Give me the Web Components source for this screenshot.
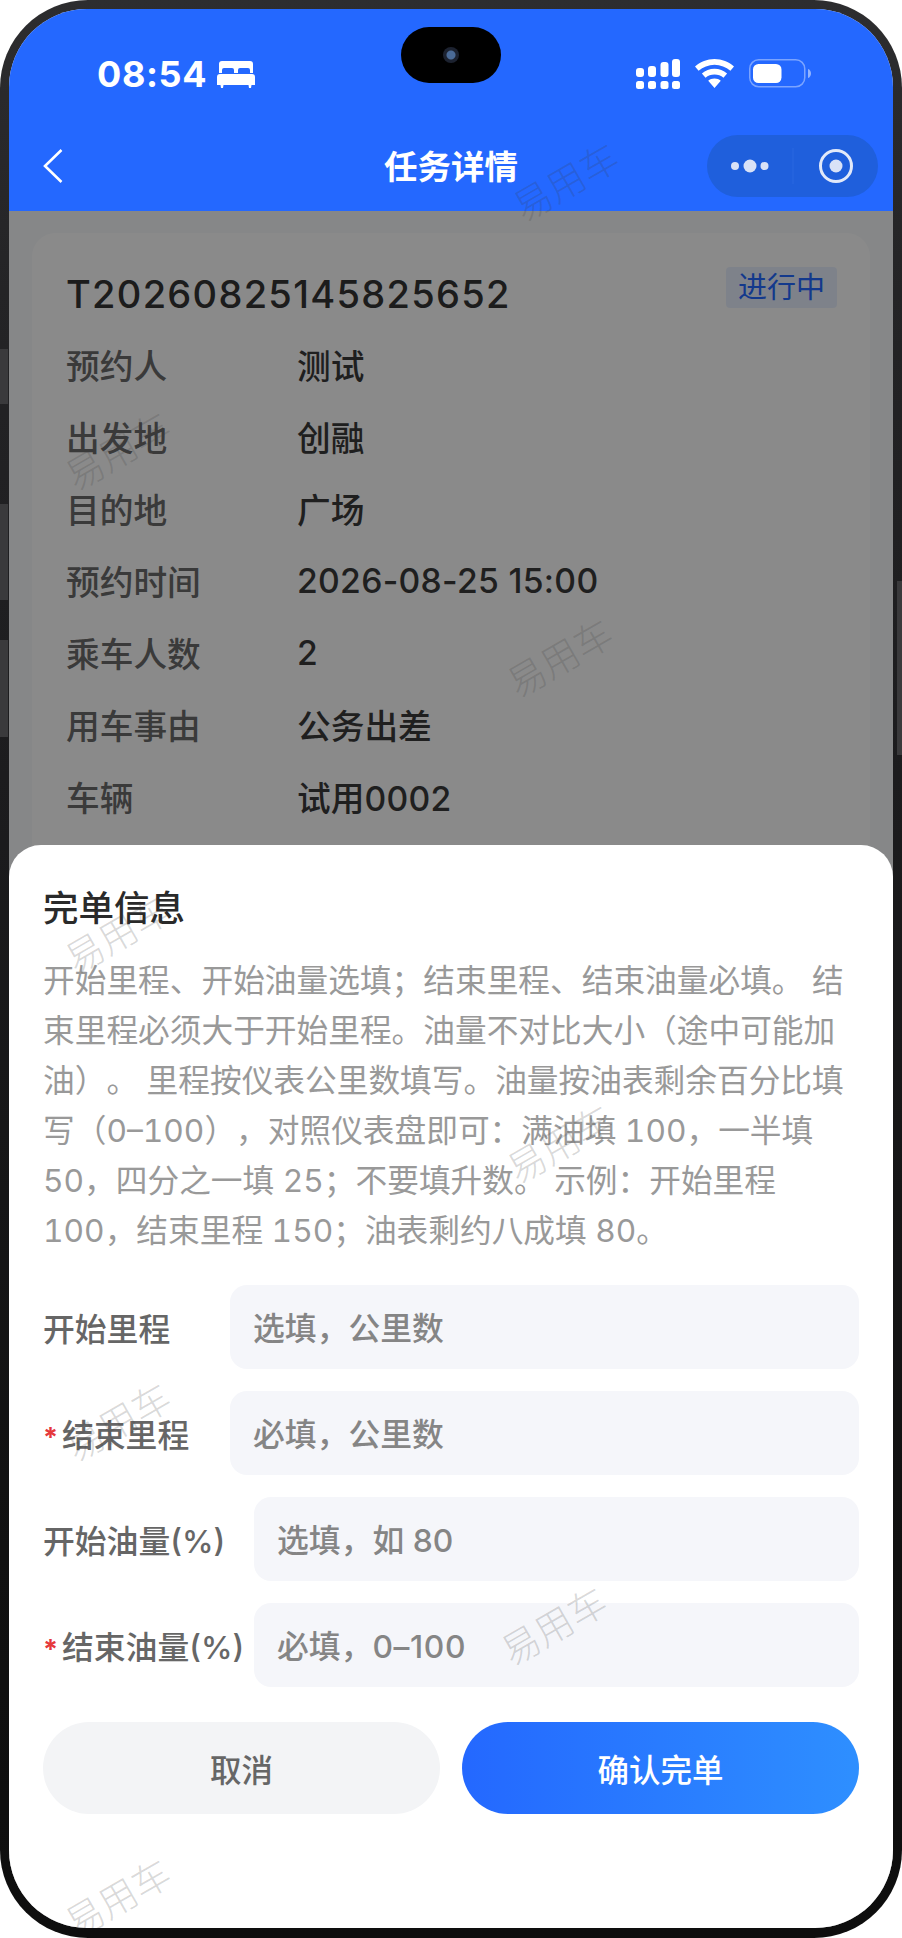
<!DOCTYPE html>
<html lang="zh">
<head>
<meta charset="utf-8">
<title>任务详情</title>
<style>
    html, body { margin: 0; background: #fff; }
    body { font-family: Inter, "Noto Sans CJK SC", sans-serif; }
</style>
</head>
<body>
<phone-frame>
    <status-bar></status-bar>
    <nav-bar>任务详情</nav-bar>
    <detail-card>
        <info-row label="预约人">测试</info-row>
        <info-row label="出发地">创融</info-row>
        <info-row label="目的地">广场</info-row>
        <info-row label="预约时间"><span style="letter-spacing:.3px">2026-08-25 15:00</span></info-row>
        <info-row label="乘车人数">2</info-row>
        <info-row label="用车事由">公务出差</info-row>
        <info-row label="车辆">试用<span style="letter-spacing:.3px">0002</span></info-row>
    </detail-card>
    <finish-sheet slot="sheet">
        <form-row label="开始里程" width="187">选填，公里数</form-row>
        <form-row label="结束里程" width="187" required>必填，公里数</form-row>
        <form-row label="开始油量(%)" width="211">选填，如 80</form-row>
        <form-row label="结束油量(%)" width="211" required>必填，<span style="letter-spacing:.6px">0–100</span></form-row>
    </finish-sheet>
    <water-mark slot="marks" style="left:500px;top:148px"></water-mark>
    <water-mark slot="marks" style="left:52px;top:417px"></water-mark>
    <water-mark slot="marks" style="left:494px;top:624px"></water-mark>
    <water-mark slot="marks" style="left:52px;top:900px"></water-mark>
    <water-mark slot="marks" style="left:494px;top:1110px"></water-mark>
    <water-mark slot="marks" style="left:52px;top:1388px"></water-mark>
    <water-mark slot="marks" style="left:488px;top:1592px"></water-mark>
    <water-mark slot="marks" style="left:52px;top:1864px"></water-mark>
</phone-frame>

<script>
class PhoneFrame extends HTMLElement {
    constructor() {
        super();
        this.attachShadow({mode: "open"}).innerHTML = /*html*/`
            <style>
                :host {
                    display: block;
                    position: relative;
                    box-sizing: border-box;
                    width: 902px;
                    height: 1938px;
                    padding: 9px 9px 10px;
                    border-radius: 88px;
                    background: linear-gradient(#2d2d2f, #242426 15%, #1c1c1e 40%, #111 80%, #0e0e0e);
                }
                .screen {
                    position: relative;
                    height: 100%;
                    overflow: hidden;
                    border-radius: 78px;
                    background: #f5f6f8;
                    display: flex;
                    flex-direction: column;
                }
                .dim {
                    position: absolute;
                    left: 0; right: 0; bottom: 0;
                    top: 202px;
                    background: rgba(0,0,0,.45);
                }
                .key { position: absolute; background: #3a3a3c; }
                .left { left: 0; width: 8px; }
                .right { right: 0; width: 5px; top: 581px; height: 174px; }
            </style>
            <div class="key left" style="top:349px;height:55px"></div>
            <div class="key left" style="top:504px;height:96px"></div>
            <div class="key left" style="top:640px;height:97px"></div>
            <div class="key right"></div>
            <div class="screen">
                <slot></slot>
                <div class="dim"></div>
                <slot name="sheet"></slot>
                <slot name="marks"></slot>
            </div>
        `;
    }
}

class StatusBar extends HTMLElement {
    constructor() {
        super();
        this.attachShadow({mode: "open"}).innerHTML = /*html*/`
            <style>
                :host {
                    display: flex;
                    flex: none;
                    position: relative;
                    box-sizing: border-box;
                    height: 104px;
                    padding: 50px 82px 0 88px;
                    background: #2468ff;
                    justify-content: space-between;
                    color: #fff;
                }
                .left { display: flex; gap: 10px; height: 30px; align-items: center; }
                .time { font: 700 36px/30px Inter, sans-serif; letter-spacing: .6px; }
                .right { display: flex; height: 30px; align-items: flex-start; }
                svg { display: block; flex: none; }
                .island {
                    position: absolute;
                    left: 392px; top: 18px;
                    width: 100px; height: 56px;
                    border-radius: 28px;
                    background: #000;
                }
                .cam {
                    position: absolute;
                    left: 42px; top: 20px;
                    width: 16px; height: 16px;
                    border-radius: 50%;
                    background: radial-gradient(circle, #4a6a96 0 4px, #1c2230 5px 8px);
                }
            </style>
            <div class="left">
                <span class="time">08:54</span>
                <svg width="38" height="27" viewBox="0 0 38 27" fill="#fff">
                    <path d="M5 0h28a3 3 0 0 1 3 3v9h-3V9a2 2 0 0 0-2-2h-8a2 2 0 0 0-2 2v3h-4V9a2 2 0 0 0-2-2H7a2 2 0 0 0-2 2v3H2V3a3 3 0 0 1 3-3z"/>
                    <path d="M3 13h32a3 3 0 0 1 3 3v8h-3.500l-.5 3h-2l-.5-3H6.500L6 27H4l-.5-3H0v-8a3 3 0 0 1 3-3z"/>
                </svg>
            </div>
            <div class="right">
                <svg width="44" height="30" viewBox="0 0 44 30" fill="#fff">
                    <rect x="0" y="9" width="8" height="9" rx="3"/>
                    <rect x="12" y="7" width="8" height="11" rx="3"/>
                    <rect x="24.500" y="3" width="8" height="15" rx="3"/>
                    <rect x="36" y="0" width="8" height="18" rx="3"/>
                    <rect x="0" y="22" width="8" height="8" rx="2.500"/>
                    <rect x="12" y="22" width="8" height="8" rx="2.500"/>
                    <rect x="24.500" y="22" width="8" height="8" rx="2.500"/>
                    <rect x="36" y="22" width="8" height="8" rx="2.500"/>
                </svg>
                <svg style="margin-left:15px" width="39" height="29" viewBox="0 0 39 29" fill="#fff">
                    <path d="M19.500 0C12 0 5.500 2.800 0 7.500l3.600 4.300C8 8 13.500 5.700 19.500 5.700s11.500 2.300 15.900 6.100L39 7.500C33.500 2.800 27 0 19.500 0z"/>
                    <path d="M19.500 9.800c-4.800 0-9.100 1.700-12.600 4.700l3.600 4.200c2.500-2 5.600-3.200 9-3.200s6.500 1.200 9 3.200l3.600-4.200c-3.500-3-7.800-4.700-12.600-4.700z"/>
                    <path d="M19.500 19.400c-2.500 0-4.600.8-6.300 2.300l6.300 7.300 6.300-7.300c-1.700-1.500-3.800-2.300-6.300-2.300z"/>
                </svg>
                <svg style="margin-left:15px" width="62" height="29" viewBox="0 0 62 29" fill="none">
                    <rect x=".75" y=".75" width="55" height="27" rx="9" stroke="#fff" stroke-opacity=".4" stroke-width="1.500"/>
                    <rect x="4" y="5" width="28.500" height="19" rx="5.500" fill="#fff"/>
                    <path d="M59 10c1.800.5 3 2.400 3 4.500S60.800 18.500 59 19z" fill="#fff" fill-opacity=".5"/>
                </svg>
            </div>
            <div class="island"><div class="cam"></div></div>
        `;
    }
}

class NavBar extends HTMLElement {
    constructor() {
        super();
        this.attachShadow({mode: "open"}).innerHTML = /*html*/`
            <style>
                :host {
                    display: flex;
                    flex: none;
                    position: relative;
                    box-sizing: border-box;
                    height: 98px;
                    padding: 8px 15px 0 34px;
                    align-items: center;
                    justify-content: space-between;
                    background: #2468ff;
                    color: #fff;
                }
                svg { display: block; }
                .title {
                    position: absolute;
                    left: 0; right: 0; top: 31px;
                    text-align: center;
                    font-size: 33.500px;
                    line-height: 46px;
                    font-weight: 700;
                }
                .capsule {
                    box-sizing: border-box;
                    width: 171px;
                    height: 62px;
                    border-radius: 31px;
                    background: #1f5fdc;
                    display: flex;
                    align-items: center;
                }
            </style>
            <svg width="20" height="36" viewBox="0 0 20 36" fill="none" stroke="#fff" stroke-width="2.600">
                <path d="M18.500 2 2 18l16.500 16"/>
            </svg>
            <div class="title"><slot></slot></div>
            <div class="capsule">
                <svg width="171" height="62" viewBox="0 0 171 62">
                    <circle cx="28" cy="31" r="4" fill="#d9e2f7"/>
                    <circle cx="43" cy="31" r="6.500" fill="#d9e2f7"/>
                    <circle cx="57.500" cy="31" r="4" fill="#d9e2f7"/>
                    <rect x="85.500" y="13" width="1" height="36" fill="#2a68e0"/>
                    <circle cx="129" cy="31" r="15.500" fill="none" stroke="#e2e9f9" stroke-width="3"/>
                    <circle cx="129" cy="31" r="6.500" fill="#d9e2f7"/>
                </svg>
            </div>
        `;
    }
}

class DetailCard extends HTMLElement {
    constructor() {
        super();
        this.attachShadow({mode: "open"}).innerHTML = /*html*/`
            <style>
                :host {
                    display: block;
                    box-sizing: border-box;
                    flex: none;
                    margin: 22px 23px 0;
                    height: 700px;
                    padding: 36px 34px 0;
                    border-radius: 24px;
                    background: #fcfcfc;
                    color: #333;
                }
                .head {
                    display: flex;
                    justify-content: space-between;
                    align-items: flex-start;
                    height: 50px;
                    margin-bottom: 9px;
                }
                .no {
                    font-size: 38px;
                    line-height: 50px;
                    font-weight: 500;
                    letter-spacing: 1.300px;
                }
                .tag {
                    margin: -2px -1px 0 0;
                    padding: 0 12px;
                    height: 41px;
                    line-height: 41px;
                    font-size: 29px;
                    color: #2468ff;
                    background: rgba(36,104,255,.1);
                    border-radius: 4px;
                }
                .rows { display: flex; flex-direction: column; }
            </style>
            <div class="head">
                <span class="no">T20260825145825652</span>
                <span class="tag">进行中</span>
            </div>
            <div class="rows"><slot></slot></div>
        `;
    }
}

class InfoRow extends HTMLElement {
    constructor() {
        super();
        this.attachShadow({mode: "open"}).innerHTML = /*html*/`
            <style>
                :host {
                    display: flex;
                    height: 72px;
                    align-items: center;
                    font-size: 33.700px;
                }
                .k { width: 231px; flex: none; color: #6a6a6a; font-weight: 500; }
                .v { color: #3a3a3a; font-weight: 500; }
            </style>
            <span class="k">${this.getAttribute("label")}</span>
            <span class="v"><slot></slot></span>
        `;
    }
}

class FinishSheet extends HTMLElement {
    constructor() {
        super();
        this.attachShadow({mode: "open"}).innerHTML = /*html*/`
            <style>
                :host {
                    display: block;
                    position: absolute;
                    left: 0; right: 0; bottom: 0;
                    top: 836px;
                    box-sizing: border-box;
                    padding: 39px 34px 0;
                    border-radius: 32px 32px 0 0;
                    background: #fff;
                }
                h2 {
                    margin: 0;
                    font-size: 35.500px;
                    line-height: 50px;
                    font-weight: 500;
                    color: #2a2a2a;
                }
                p {
                    margin: 22px 0 29px;
                    font-size: 31.700px;
                    line-height: 50px;
                    color: #999;
                    text-spacing-trim: space-all;
                    font-variant-numeric: tabular-nums;
                }
                .rows { display: flex; flex-direction: column; gap: 22px; }
                .actions { display: flex; gap: 22px; margin-top: 35px; }
            </style>
            <h2>完单信息</h2>
            <p>开始里程、开始油量选填；结束里程、结束油量必填。 结束里程必须大于开始里程。油量不对比大小（途中可能加油）。 里程按仪表公里数填写。油量按油表剩余百分比填写（0–100），对照仪表盘即可：满油填 100，一半填 50，四分之一填 25；不要填升数。 示例：开始里程 100，结束里程 150；油表剩约八成填 80。</p>
            <div class="rows"><slot></slot></div>
            <div class="actions">
                <app-button>取消</app-button>
                <app-button primary>确认完单</app-button>
            </div>
        `;
    }
}

class FormRow extends HTMLElement {
    constructor() {
        super();
        const star = this.hasAttribute("required") ? `<span class="star">*</span>` : "";
        this.attachShadow({mode: "open"}).innerHTML = /*html*/`
            <style>
                :host {
                    display: flex;
                    height: 84px;
                    align-items: center;
                    font-size: 31.800px;
                    font-weight: 500;
                }
                .label {
                    flex: none;
                    width: ${this.getAttribute("width")}px;
                    color: #666;
                    display: flex;
                    align-items: center;
                    white-space: nowrap;
                }
                .star {
                    color: #e5383b;
                    width: 19px;
                    flex: none;
                    font-size: 27px;
                    line-height: 27px;
                    font-weight: 700;
                    padding-top: 8px;
                }
                .field {
                    flex: 1;
                    height: 100%;
                    box-sizing: border-box;
                    padding: 3px 0 0 23px;
                    display: block;
                    line-height: 81px;
                    background: #f5f6fa;
                    border-radius: 17px;
                    color: #858585;
                }
            </style>
            <div class="label">${star}${this.getAttribute("label")}</div>
            <div class="field"><slot></slot></div>
        `;
    }
}

class AppButton extends HTMLElement {
    constructor() {
        super();
        this.attachShadow({mode: "open"}).innerHTML = /*html*/`
            <style>
                :host {
                    display: flex;
                    flex: 1;
                    height: 92px;
                    align-items: center;
                    justify-content: center;
                    border-radius: 46px;
                    font-size: 31.500px;
                    font-weight: 500;
                    color: #666;
                    background: #f3f4f6;
                }
                :host([primary]) {
                    color: #fff;
                    background: linear-gradient(90deg, #2468ff, #2e8fff);
                }
            </style>
            <slot></slot>
        `;
    }
}

class WaterMark extends HTMLElement {
    constructor() {
        super();
        this.attachShadow({mode: "open"}).innerHTML = /*html*/`
            <style>
                :host {
                    position: absolute;
                    display: block;
                    font-size: 38px;
                    line-height: 50px;
                    font-weight: 300;
                    white-space: nowrap;
                    color: rgba(60,60,60,.2);
                    transform: rotate(-30deg);
                    pointer-events: none;
                }
            </style>
            易用车
        `;
    }
}

customElements.define("phone-frame", PhoneFrame);
customElements.define("status-bar", StatusBar);
customElements.define("nav-bar", NavBar);
customElements.define("detail-card", DetailCard);
customElements.define("info-row", InfoRow);
customElements.define("finish-sheet", FinishSheet);
customElements.define("form-row", FormRow);
customElements.define("app-button", AppButton);
customElements.define("water-mark", WaterMark);
</script>
</body>
</html>
